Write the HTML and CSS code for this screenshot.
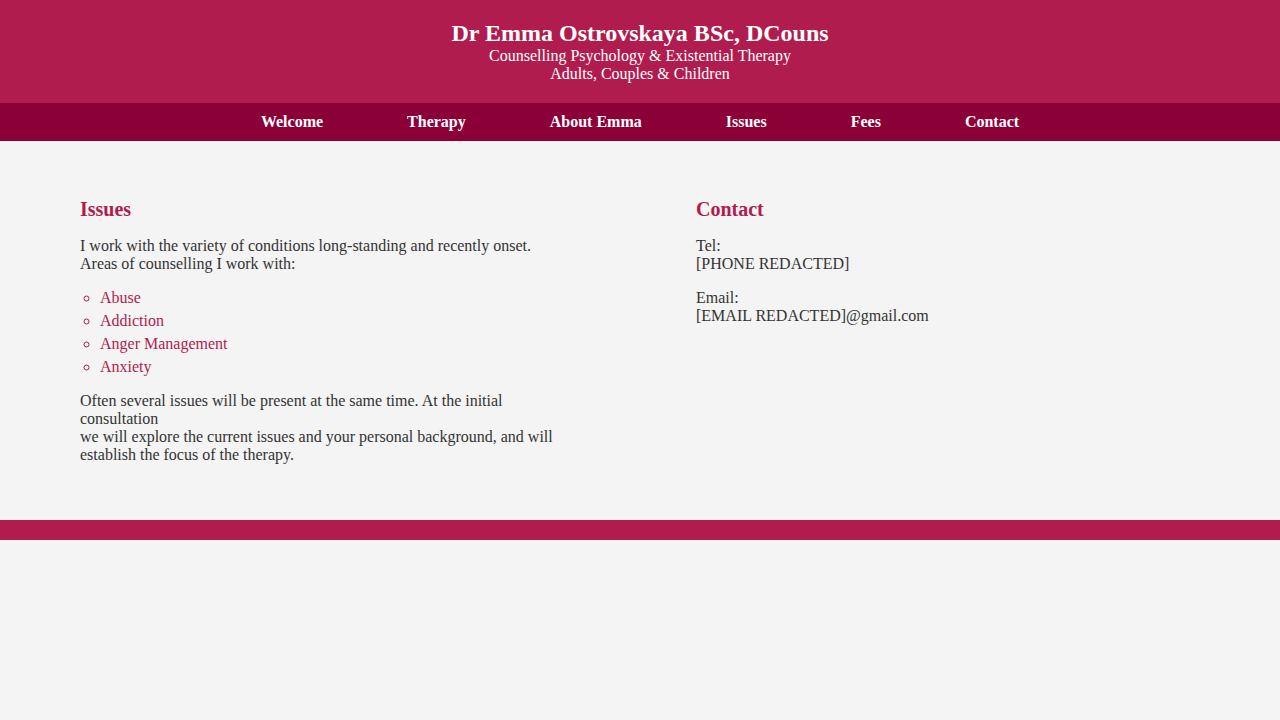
FILE: index.html
```html
<!DOCTYPE html>
<html lang="en">
<head>
<meta charset="utf-8">
<title>Dr Emma Ostrovskaya - Issues</title>
<link rel="stylesheet" href="styles.css">
</head>
<body>
<header class="site-header">
  <h1 class="site-title">Dr Emma Ostrovskaya BSc, DCouns</h1>
  <div class="site-sub">Counselling Psychology &amp; Existential Therapy</div>
  <div class="site-sub">Adults, Couples &amp; Children</div>
</header>
<nav class="site-nav">
  <a href="#">Welcome</a>
  <a href="#">Therapy</a>
  <a href="#">About Emma</a>
  <a href="#">Issues</a>
  <a href="#">Fees</a>
  <a href="#">Contact</a>
</nav>
<main class="content">
  <section class="col">
    <h2 class="col-title">Issues</h2>
    <p>I work with the variety of conditions long-standing and recently onset.<br>Areas of counselling I work with:</p>
    <ul class="issue-list">
      <li>Abuse</li>
      <li>Addiction</li>
      <li>Anger Management</li>
      <li>Anxiety</li>
    </ul>
    <p>Often several issues will be present at the same time. At the initial consultation<br>we will explore the current issues and your personal background, and will establish the focus of the therapy.</p>
  </section>
  <section class="col">
    <h2 class="col-title">Contact</h2>
    <p>Tel:<br>[PHONE REDACTED]</p>
    <p>Email:<br>[EMAIL REDACTED]@gmail.com</p>
  </section>
</main>
<footer class="site-footer"></footer>
</body>
</html>
```
FILE: styles.css
```css
html, body {
  margin: 0;
  padding: 0;
}
body {
  background: #f4f4f4;
  font-family: "Liberation Serif", "Times New Roman", serif;
  font-size: 16px;
  color: #333333;
}
.site-header {
  background: #b01c4e;
  color: #ffffff;
  text-align: center;
  padding: 20px 0 20px;
}
.site-title {
  margin: 0;
  font-size: 24px;
  font-weight: bold;
}
.site-sub {
  font-size: 16px;
}
.site-nav {
  background: #8b0037;
  height: 38px;
  display: flex;
  justify-content: center;
  align-items: center;
  gap: 84px;
}
.site-nav a {
  color: #ffffff;
  font-weight: bold;
  text-decoration: none;
  font-size: 16px;
}
.content {
  display: grid;
  grid-template-columns: 1fr 1fr;
  column-gap: 112px;
  padding: 41px 80px 40px;
}
.col-title {
  color: #b01c4e;
  font-size: 20px;
  margin: 16px 0;
}
.col p {
  margin: 16px 0;
}
.issue-list {
  list-style: circle;
  color: #b01c4e;
  margin: 16px 0;
  padding-left: 20px;
}
.issue-list li {
  margin-bottom: 5px;
}
.issue-list li:last-child {
  margin-bottom: 0;
}
.site-footer {
  background: #b01c4e;
  height: 20px;
}
```
